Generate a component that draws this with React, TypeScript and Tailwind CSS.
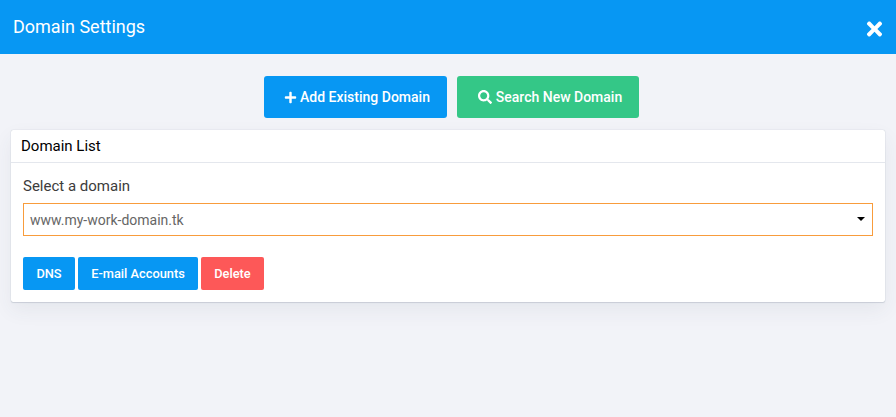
import { FaPlus, FaSearch, FaTimes } from "react-icons/fa";

export default function App() {
  return (
    <div className="h-[417px] w-[896px] overflow-hidden bg-[#f2f3f8] font-['Roboto',sans-serif]">
      <header className="flex h-[54px] items-center justify-between bg-[#0797f3] pl-[13px] pr-[12px] text-white">
        <h1 className="mb-[2px] text-[18px] font-normal">Domain Settings</h1>
        <FaTimes className="mt-[3px] h-[22px] w-[19px]" />
      </header>

      <div className="mt-[22px] flex justify-center gap-[10px] pl-[7px]">
        <button className="flex h-[42px] w-[183px] items-center justify-center gap-[3px] rounded-[3px] bg-[#0797f3] pl-[3px] text-sm font-medium text-white">
          <FaPlus className="h-[13px] w-[13px]" />
          Add Existing Domain
        </button>
        <button className="flex h-[42px] w-[182px] items-center justify-center gap-[4px] rounded-[3px] bg-[#34c787] pl-[4px] text-sm font-medium text-white">
          <FaSearch className="h-[14px] w-[14px]" />
          Search New Domain
        </button>
      </div>

      <section className="mx-[11px] mt-[12px] h-[172px] rounded-[2px] bg-white shadow-[0_0_1px_rgba(60,80,110,0.35),0_1px_1px_rgba(60,80,110,0.15),0_8px_20px_rgba(60,70,90,0.07)]">
        <div className="flex h-[33px] items-center border-b border-[#e4e7ed] px-[10px] text-[15px] text-black">
          Domain List
        </div>
        <div className="px-[12px] pt-[14px]">
          <label className="block h-[26px] text-[15px] leading-[18px] text-[#3c3c3c]">Select a domain</label>
          <div className="flex h-[33px] items-center justify-between border border-[#f89c3c] pl-[6px] pr-[7px] text-sm text-[#666666]">
            <span>www.my-work-domain.tk</span>
            <span className="mb-[1px] h-0 w-0 border-x-[4px] border-t-[4px] border-x-transparent border-t-black" />
          </div>
          <div className="mt-[21px] flex gap-[3px]">
            <button className="h-[33px] w-[52px] rounded-[2px] bg-[#0797f3] text-[12.8px] font-medium text-white">DNS</button>
            <button className="h-[33px] w-[120px] rounded-[2px] bg-[#0797f3] text-[12.8px] font-medium text-white">E-mail Accounts</button>
            <button className="h-[33px] w-[63px] rounded-[2px] bg-[#fd5858] text-[12.8px] font-medium text-white">Delete</button>
          </div>
        </div>
      </section>
    </div>
  );
}
